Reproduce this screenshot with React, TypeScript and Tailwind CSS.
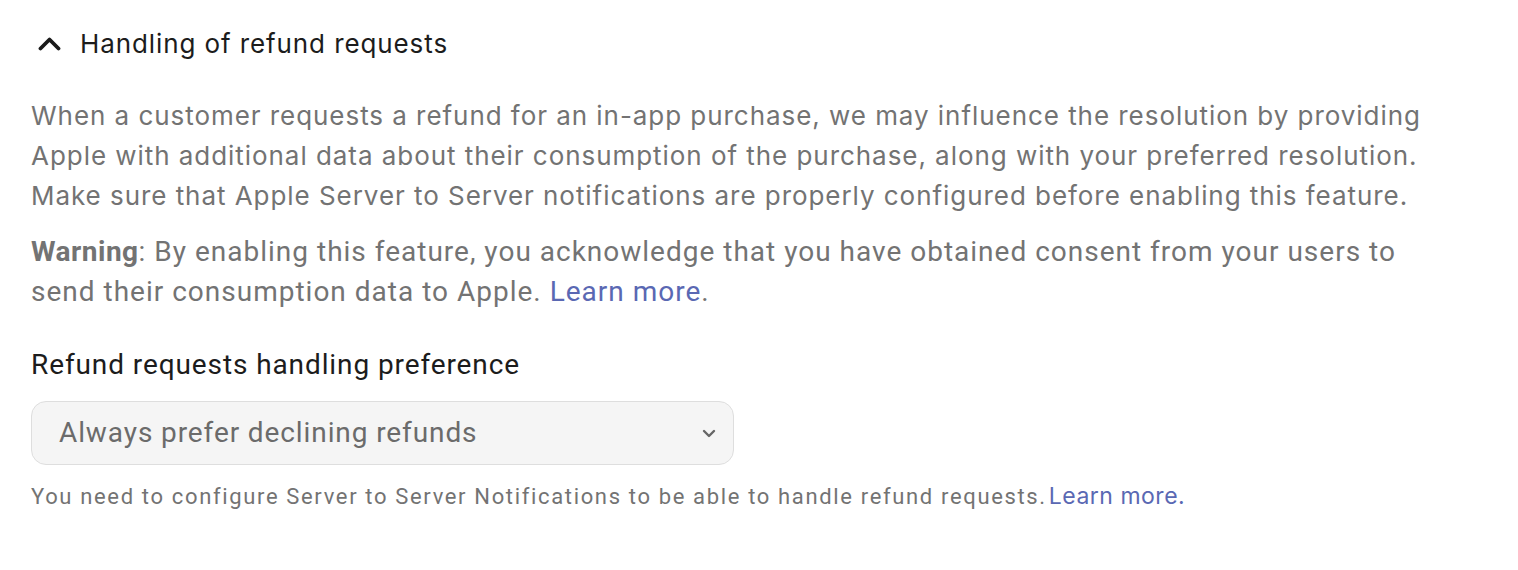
import React from 'react';

const inter = { fontFamily: 'Inter, "Noto Sans", sans-serif' };
const roboto = { fontFamily: 'Roboto, "Liberation Sans", sans-serif' };

export default function App() {
  return (
    <div className="min-h-[570px] w-[1518px] bg-white px-[31px] pt-[26px] text-[#1c1c1c]">
      {/* Section header */}
      <button className="flex items-center gap-[19px] pl-[7px]" style={inter}>
        <svg width="23" height="14" viewBox="0 0 23 14" fill="none">
          <path d="M2.5 11.5 L11.5 2.5 L20.5 11.5" stroke="#1a1a1a" strokeWidth="3.8" strokeLinecap="round" strokeLinejoin="round" />
        </svg>
        <span className="text-[26px] leading-9 tracking-[0.9px]">Handling of refund requests</span>
      </button>

      {/* Description */}
      <p className="mt-[34px] text-[26px] leading-10 tracking-[0.95px] text-[#737373]" style={inter}>
        When a customer requests a refund for an in-app purchase, we may influence the resolution by providing
        <br />
        Apple with additional data about their consumption of the purchase, along with your preferred resolution.
        <br />
        Make sure that Apple Server to Server notifications are properly configured before enabling this feature.
      </p>

      <p className="mt-[16px] text-[28px] leading-10 tracking-[1px] text-[#737373]" style={roboto}>
        <span className="font-bold tracking-[0.5px]">Warning</span>: By enabling this feature, you acknowledge that you have obtained consent from your users to
        <br />
        send their consumption data to Apple. <a className="text-[#5a68b3]">Learn more</a>.
      </p>

      {/* Preference select */}
      <div className="mt-[35px]" style={roboto}>
        <label className="block text-[28px] leading-9 tracking-[0.9px] text-[#1c1c1c]">Refund requests handling preference</label>
        <div className="mt-[18px] flex h-[64px] w-[703px] items-center justify-between rounded-[15px] border border-[#dedede] bg-[#f5f5f5] pl-[27px] pr-[17px]">
          <span className="text-[28px] tracking-[0.9px] text-[#6b6b6b]">Always prefer declining refunds</span>
          <svg width="14" height="9" viewBox="0 0 14 9" fill="none">
            <path d="M2 2 L7 7 L12 2" stroke="#666" strokeWidth="2.4" strokeLinecap="round" strokeLinejoin="round" />
          </svg>
        </div>
        <p className="mt-[17px] text-[22px] leading-7 tracking-[1.65px] text-[#737373]">
          You need to configure Server to Server Notifications to be able to handle refund requests.
          <a className="ml-[2px] text-[23px] tracking-[0.5px] text-[#5a68b3]" style={inter}>Learn more.</a>
        </p>
      </div>
    </div>
  );
}
